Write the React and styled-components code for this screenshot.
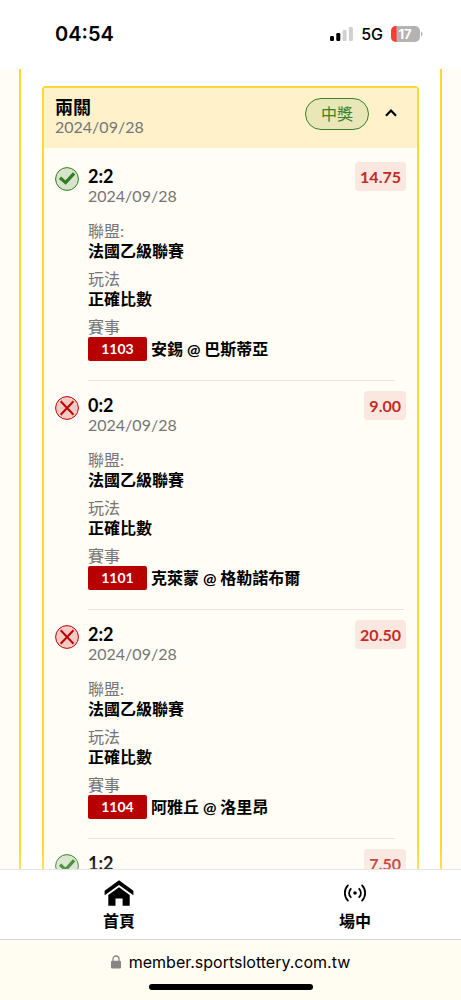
import React, { useState } from "react";
import styled, { createGlobalStyle } from "styled-components";

const GlobalStyle = createGlobalStyle`
  *, *::before, *::after { box-sizing: border-box; }
  body {
    margin: 0;
    background: #fffdf5;
    color: #000;
    font-family: Lato, "Noto Sans CJK TC", sans-serif;
    font-size: 16px;
    line-height: 20px;
  }
  button { font: inherit; color: inherit; background: none; border: 0; padding: 0; }
`;

const systemFont = 'Inter, "Noto Sans CJK TC", sans-serif';

const Screen = styled.div`
  display: flex;
  flex-direction: column;
  height: 100vh;
`;

const StatusBar = styled.header`
  display: flex;
  align-items: center;
  justify-content: space-between;
  flex: none;
  padding: 22px 39px 23px 55px;
  background: #fff;
  font-family: ${systemFont};
`;

const Clock = styled.time`
  font-size: 20px;
  line-height: 24px;
  font-weight: 600;
`;

const Indicators = styled.div`
  display: flex;
  align-items: center;
  gap: 8px;
  font-weight: 500;
`;

const Content = styled.main`
  display: flex;
  flex-direction: column;
  flex: 1;
  min-height: 0;
  overflow: hidden;
  padding: 0 19px;
`;

const Panel = styled.section`
  display: flex;
  flex: 1 0 auto;
  padding: 17px 21px 0;
  background: #fff;
  border: solid #fdd835;
  border-width: 0 2px;
`;

const Card = styled.article`
  flex: 1;
  min-width: 0;
  background: #fffdf5;
  border: 2px solid #fdd835;
  border-bottom: 0;
  border-radius: 4px 4px 0 0;
`;

const CardHeader = styled.header`
  display: flex;
  align-items: flex-start;
  padding: 9px 11px 11px;
  background: #fff2cb;
`;

const CardTitle = styled.div`
  flex: 1;
`;

const Title = styled.h2`
  margin: 0;
  font-size: 18px;
  line-height: 20px;
  font-weight: 700;
`;

const DateText = styled.time`
  display: block;
  color: #757575;
`;

const StatusPill = styled.span`
  margin-top: 1px;
  padding: 5px 15px;
  border: 1px solid #388128;
  border-radius: 16px;
  background: #e9e6b7;
  color: #388128;
`;

const Toggle = styled.button`
  display: flex;
  align-items: center;
  justify-content: center;
  width: 20px;
  height: 32px;
  margin-left: 12px;
  margin-right: 5px;
  cursor: pointer;
`;

const Legs = styled.ul`
  margin: 0;
  padding: 14px 11px 0;
  list-style: none;
`;

const Leg = styled.li`
  display: flex;
  align-items: flex-start;
`;

const ResultIcon = styled.svg`
  flex: none;
  width: 24px;
  height: 24px;
  margin: 5px 9px 0 0;
`;

const LegBody = styled.div`
  flex: 1;
  min-width: 0;
  padding-top: 4px;
`;

const Score = styled.h3`
  margin: 0;
  font-size: 18px;
  line-height: 20px;
  font-weight: 700;
`;

const Details = styled.dl`
  display: flex;
  flex-direction: column;
  gap: 8px;
  margin: 15px 0 0;
`;

const Term = styled.dt`
  color: #757575;
`;

const Value = styled.dd`
  display: flex;
  align-items: center;
  gap: 4px;
  margin: 0;
  font-weight: 700;
  white-space: nowrap;
`;

const MatchCode = styled.span`
  width: 59px;
  border-radius: 2px;
  background: #b90000;
  color: #fff;
  font-size: 14px;
  line-height: 24px;
  text-align: center;
`;

const Divider = styled.hr`
  height: 1px;
  margin: 19px -40px 10px 0;
  border: 0;
  background: #e6e4dd;
`;

const Odds = styled.strong`
  padding: 5px 5px 4px;
  border-radius: 4px;
  background: #f9e7e0;
  color: #c02d26;
  font-weight: 700;
`;

const TabBar = styled.nav`
  position: relative;
  display: flex;
  justify-content: space-between;
  flex: none;
  padding: 10px 90px 8px 103px;
  background: #fff;
  border-top: 1px solid #e4e4e4;
  border-bottom: 1px solid #d6d6d2;

  &::before {
    content: "";
    position: absolute;
    inset: -21px 0 auto;
    height: 20px;
    background: linear-gradient(rgba(255, 255, 255, 0), rgba(255, 255, 255, 0.2));
    pointer-events: none;
  }
`;

const Tab = styled.a`
  display: flex;
  flex-direction: column;
  align-items: center;
  gap: 3px;
  color: #000;
  font-weight: 700;
  text-decoration: none;

  svg { height: 28px; }
`;

const BrowserBar = styled.footer`
  display: flex;
  flex-direction: column;
  align-items: center;
  flex: none;
  gap: 12px;
  padding: 12px 0 10px;
  background: #fffcf2;
`;

const Address = styled.button`
  display: flex;
  align-items: center;
  gap: 8px;
  font-family: ${systemFont};
  font-size: 16px;
  line-height: 20px;
`;

const HomeIndicator = styled.div`
  width: 164px;
  height: 6px;
  border-radius: 3px;
  background: #000;
`;

const BatteryBox = styled.span`
  position: relative;
  display: block;
  width: 31px;
  height: 16px;

  svg { display: block; }
`;

const BatteryLevel = styled.span`
  position: absolute;
  inset: 0 3px 0 0;
  color: #fff;
  font-size: 13px;
  line-height: 16px;
  font-weight: 700;
  text-align: center;
`;

function Signal() {
  return (
    <svg width="23" height="14" viewBox="0 0 23 14" aria-hidden="true">
      <rect x="0" y="9" width="4" height="5" rx="1.2" />
      <rect x="6.3" y="6" width="4" height="8" rx="1.2" />
      <rect x="12.6" y="3" width="4" height="11" rx="1.2" fill="#d0d0d0" />
      <rect x="18.9" y="0" width="4" height="14" rx="1.2" fill="#d0d0d0" />
    </svg>
  );
}

function Battery({ level }) {
  return (
    <BatteryBox>
      <svg width="32" height="16" viewBox="0 0 32 16" aria-hidden="true">
        <defs>
          <clipPath id="cell"><rect width="29" height="16" rx="5" /></clipPath>
        </defs>
        <g clipPath="url(#cell)">
          <rect width="29" height="16" fill="#b3b3b3" />
          <rect width="5.5" height="16" fill="#ff3b30" />
        </g>
        <path d="M30 5.5c2 .8 2 4.2 0 5z" fill="#b3b3b3" />
      </svg>
      <BatteryLevel>{level}</BatteryLevel>
    </BatteryBox>
  );
}

function Result({ won }) {
  const color = won ? "#2f7d20" : "#bd0000";
  return (
    <ResultIcon viewBox="0 0 24 24" aria-hidden="true" fill="none">
      <circle cx="12" cy="12" r="11.4" fill={won ? "#d7e3cb" : "#f3cbc6"} stroke={color} strokeWidth="1" />
      {won ? (
        <path d="M6.200 11.800L10.600 15.600L18 7.600" stroke={color} strokeWidth="3.200" strokeLinecap="square" />
      ) : (
        <path d="M5.700 5.200l12.800 13.600M18.500 5.200L5.700 18.800" stroke={color} strokeWidth="2" />
      )}
    </ResultIcon>
  );
}

const legs = [
  { score: "2:2", date: "2024/09/28", won: true, odds: "14.75", code: "1103", match: "安錫 @ 巴斯蒂亞" },
  { score: "0:2", date: "2024/09/28", won: false, odds: "9.00", code: "1101", match: "克萊蒙 @ 格勒諾布爾" },
  { score: "2:2", date: "2024/09/28", won: false, odds: "20.50", code: "1104", match: "阿雅丘 @ 洛里昂" },
  { score: "1:2", won: true, odds: "7.50" },
];

function LegRow({ leg }) {
  return (
    <Leg>
      <Result won={leg.won} />
      <LegBody>
        <Score>{leg.score}</Score>
        {leg.date && <DateText>{leg.date}</DateText>}
        {leg.code && (
          <>
            <Details>
              <div>
                <Term>聯盟:</Term>
                <Value>法國乙級聯賽</Value>
              </div>
              <div>
                <Term>玩法</Term>
                <Value>正確比數</Value>
              </div>
              <div>
                <Term>賽事</Term>
                <Value>
                  <MatchCode>{leg.code}</MatchCode>
                  {leg.match}
                </Value>
              </div>
            </Details>
            <Divider />
          </>
        )}
      </LegBody>
      <Odds>{leg.odds}</Odds>
    </Leg>
  );
}

export default function App() {
  const [open, setOpen] = useState(true);
  return (
    <Screen>
      <GlobalStyle />
      <StatusBar>
        <Clock>04:54</Clock>
        <Indicators>
          <Signal />
          <span>5G</span>
          <Battery level={17} />
        </Indicators>
      </StatusBar>

      <Content>
        <Panel>
          <Card>
            <CardHeader>
              <CardTitle>
                <Title>兩關</Title>
                <DateText>2024/09/28</DateText>
              </CardTitle>
              <StatusPill>中獎</StatusPill>
              <Toggle type="button" aria-expanded={open} onClick={() => setOpen(!open)}>
                <svg width="12" height="8" viewBox="0 0 12 8" fill="none" stroke="#000" strokeWidth="2.2" aria-hidden="true">
                  <path d={open ? "M1 6.8L6 1.6l5 5.2" : "M1 1.2l5 5.2 5-5.2"} />
                </svg>
              </Toggle>
            </CardHeader>
            {open && (
              <Legs>
                {legs.map((leg, i) => <LegRow key={i} leg={leg} />)}
              </Legs>
            )}
          </Card>
        </Panel>
      </Content>

      <TabBar>
        <Tab href="#home">
          <svg width="30" height="28" viewBox="0 0 30 28" aria-hidden="true">
            <path d="M15 .3L29.400 10.800V15.300L15 5 .6 15.300V10.800z" />
            <path d="M15 7.200L25.700 15V25.800H18.600V18.600H11.500V25.800H4.300V15z" />
          </svg>
          首頁
        </Tab>
        <Tab href="#live">
          <svg width="24" height="28" viewBox="0 -1 24 28" fill="none" stroke="#000" strokeWidth="1.8" strokeLinecap="round" aria-hidden="true">
            <path d="M16.200 7.800a6 6 0 0 1 0 8.400M19.100 4.400a11 11 0 0 1 0 15.200M7.800 16.200a6 6 0 0 1 0-8.400M4.900 19.600a11 11 0 0 1 0-15.200" />
            <circle cx="12" cy="12" r="1.800" fill="#000" stroke="none" />
          </svg>
          場中
        </Tab>
      </TabBar>

      <BrowserBar>
        <Address type="button">
          <svg width="10" height="14" viewBox="0 0 10 14" fill="none" aria-hidden="true">
            <rect x="0" y="5.800" width="10" height="7.700" rx="1.300" fill="#858585" />
            <path d="M2 6.500V4a3 3 0 0 1 6 0v2.500" stroke="#858585" strokeWidth="1.300" />
          </svg>
          member.sportslottery.com.tw
        </Address>
        <HomeIndicator />
      </BrowserBar>
    </Screen>
  );
}
